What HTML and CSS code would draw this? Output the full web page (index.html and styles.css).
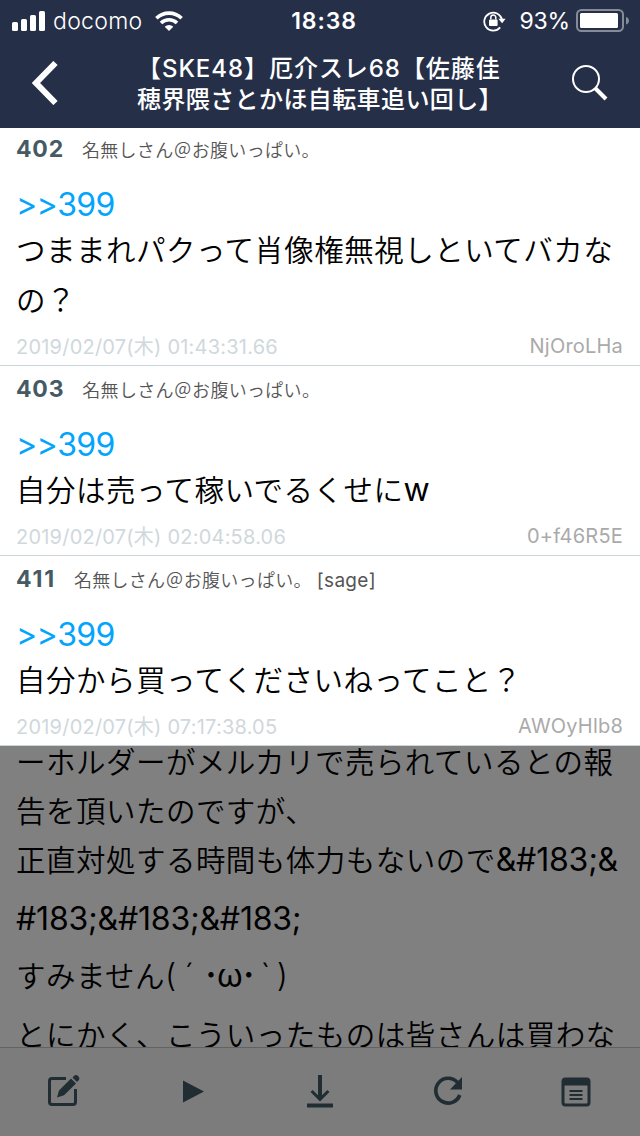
FILE: index.html
```
<!DOCTYPE html>
<html lang="ja">
<head>
<meta charset="utf-8">
<title>厄介スレ68</title>
<link rel="stylesheet" href="styles.css">
</head>
<body>
<div class="screen">
  <header class="header">
    <div class="status">
      <div class="status-left">
        <svg class="signal" width="34" height="20" viewBox="0 0 34 20" fill="#fff"><rect x="0" y="11" width="6" height="9" rx="1.6"/><rect x="9" y="8" width="6" height="12" rx="1.6"/><rect x="18" y="4" width="6" height="16" rx="1.6"/><rect x="27" y="0" width="6" height="20" rx="1.6"/></svg>
        <span class="carrier">docomo</span>
        <svg class="wifi" width="28" height="20" viewBox="0 0 28 20" fill="none" stroke="#fff" stroke-width="3.6"><path d="M1.4 7.2A18.2 18.2 0 0 1 26.6 7.2"/><path d="M6 12A11.6 11.6 0 0 1 22 12"/><path d="M14 20L9.7 15.7A6.2 6.2 0 0 1 18.3 15.7Z" fill="#fff" stroke="none"/></svg>
      </div>
      <div class="clock">18:38</div>
      <div class="status-right">
        <svg class="lock" width="23" height="22" viewBox="0 0 23 22"><path d="M17.2 17.4A9 9 0 1 1 19 9.500" fill="none" stroke="#fff" stroke-width="1.8"/><path d="M15.400 8.8H22.6L19.1 13.2Z" fill="#fff"/><rect x="6" y="9.500" width="8.6" height="6.5" rx="1" fill="#fff"/><path d="M7.8 9.500V7.500A2.5 2.5 0 0 1 12.8 7.500V9.500" fill="none" stroke="#fff" stroke-width="1.5"/></svg>
        <span class="percent">93%</span>
        <svg class="battery" width="53" height="24" viewBox="0 0 53 24"><rect x="1" y="1" width="46" height="21" rx="4.5" fill="none" stroke="#878b98" stroke-width="2"/><rect x="4" y="4" width="38" height="15" rx="1.5" fill="#fff"/><path d="M50 8Q53 9 53 11.700T50 15.500Z" fill="#878b98"/></svg>
      </div>
    </div>
    <div class="nav">
      <svg class="back" width="28" height="44" viewBox="0 0 28 44" fill="none" stroke="#fff" stroke-width="6"><path d="M23.500 2L4 22L23.500 42"/></svg>
      <h1 class="title"><span class="t1">【SKE48】厄介スレ68【佐藤佳</span><span class="t2">穂界隈さとかほ自転車追い回し】</span></h1>
      <svg class="search" width="36" height="36" viewBox="0 0 36 36" fill="none" stroke="#fff"><circle cx="14" cy="14" r="13" stroke-width="2"/><path d="M23 23L34 34" stroke-width="4"/></svg>
    </div>
  </header>

  <main class="posts">
    <article class="post">
      <div class="post-head"><b class="num">402</b><span class="name">名無しさん＠お腹いっぱい。</span></div>
      <div class="quote">&gt;&gt;399</div>
      <div class="line">つままれパクって肖像権無視しといてバカな</div>
      <div class="line">の？</div>
      <div class="post-foot"><span class="date">2019/02/07(木) 01:43:31.66</span><span class="id">NjOroLHa</span></div>
    </article>
    <article class="post">
      <div class="post-head"><b class="num">403</b><span class="name">名無しさん＠お腹いっぱい。</span></div>
      <div class="quote">&gt;&gt;399</div>
      <div class="line">自分は売って稼いでるくせに<span class="latin">w</span></div>
      <div class="post-foot"><span class="date">2019/02/07(木) 02:04:58.06</span><span class="id">0+f46R5E</span></div>
    </article>
    <article class="post">
      <div class="post-head"><b class="num narrow">411</b><span class="name">名無しさん＠お腹いっぱい。<span class="sage">[sage]</span></span></div>
      <div class="quote">&gt;&gt;399</div>
      <div class="line">自分から買ってくださいねってこと？</div>
      <div class="post-foot"><span class="date">2019/02/07(木) 07:17:38.05</span><span class="id">AWOyHlb8</span></div>
    </article>
  </main>

  <section class="dimmed">
    <div class="line">ーホルダーがメルカリで売られているとの報</div>
    <div class="line">告を頂いたのですが、</div>
    <div class="line">正直対処する時間も体力もないので<span class="latin">&amp;#183;&amp;</span></div>
    <div class="line tall"><span class="latin">#183;&amp;#183;&amp;#183;</span></div>
    <div class="line">すみません<span class="latin face">(</span><span class="mark acute">´</span><span class="latin eyes">･ω･</span><span class="mark grave">`</span><span class="latin face">)</span></div>
    <div class="line last">とにかく、こういったものは皆さんは買わな</div>
  </section>

  <footer class="toolbar">
    <div class="tool"><svg width="34" height="34" viewBox="0 0 34 34"><path d="M19 4.500H5Q2.500 4.500 2.500 7V28Q2.500 30.500 5 30.500H26Q28.500 30.500 28.500 28V15" fill="none" stroke="#202d33" stroke-width="3"/><path d="M10 23.500L12 16.500L24 4.500L29 9.500L17 21.200ZM25.500 3.500L27.400 1.600Q29.300 .2 31.300 2.200T31.900 6.100L30 8Z" fill="#202d33"/></svg></div>
    <div class="tool"><svg width="34" height="34" viewBox="0 0 34 34"><path d="M8 6.500V28.500L29 17.500Z" fill="#202d33"/></svg></div>
    <div class="tool"><svg width="34" height="34" viewBox="0 0 34 34" fill="none" stroke="#202d33"><path d="M17 1V24" stroke-width="4"/><path d="M8.600 17L17 25.400L25.400 17" stroke-width="3"/><path d="M4 31.500H30" stroke-width="4"/></svg></div>
    <div class="tool"><svg width="34" height="34" viewBox="0 0 34 34"><path d="M26.500 8.500A12.400 12.400 0 1 0 28.800 21" fill="none" stroke="#202d33" stroke-width="3.600"/><path d="M31 3V15.500H19Z" fill="#202d33"/></svg></div>
    <div class="tool"><svg width="34" height="34" viewBox="0 0 34 34" fill="none" stroke="#202d33"><rect x="4" y="5" width="26" height="26" rx="2.500" stroke-width="3"/><path d="M4 8H30" stroke-width="7"/><path d="M10.500 17H23.500M10.500 21H23.500M10.500 25H23.500" stroke-width="2"/></svg></div>
  </footer>
</div>
</body>
</html>
```
FILE: styles.css
```
* { box-sizing: border-box; }
body {
  margin: 0;
  font-family: Inter, "Noto Sans CJK JP", sans-serif;
}
svg { display: block; flex: none; }
.screen {
  width: 640px;
  height: 1136px;
  overflow: hidden;
  display: flex;
  flex-direction: column;
  background: #fff;
}
.header {
  flex: none;
  height: 128px;
  background: #262f48;
  color: #fff;
}
.status {
  height: 41px;
  display: grid;
  grid-template-columns: 1fr auto 1fr;
  align-items: center;
  padding: 0 11px 0 12px;
  font-size: 23px;
  line-height: 42px;
}
.status-left, .status-right { display: flex; align-items: center; }
.status-right { justify-content: flex-end; }
.carrier { margin-left: 7px; width: 102px; letter-spacing: 0.3px; font-weight: 300; }
.clock { font-weight: 600; letter-spacing: 0.9px; padding-left: 7px; }
.percent { margin: 0 6px 0 14px; letter-spacing: -0.2px; }
.nav {
  height: 87px;
  display: flex;
  justify-content: space-between;
  align-items: center;
  padding: 0 32px 3px 32px;
}
.title {
  margin: 0 0 0 8px;
  height: 61px;
  width: 366px;
  display: flex;
  flex-direction: column;
  font-size: 24px;
  line-height: 31px;
  font-weight: 500;
  white-space: nowrap;
}
.t1 { letter-spacing: 0.95px; }
.t2 { letter-spacing: 0.4px; }

.posts { flex: none; height: 618px; display: flex; flex-direction: column; justify-content: flex-end; overflow: hidden; }
.post { flex: none; padding: 0 17px 0 16px; border-bottom: 1px solid #ccd5d9; }
.post-head {
  height: 46px;
  margin-bottom: 13px;
  display: flex;
  align-items: center;
  gap: 18px;
}
.num { font-size: 23px; font-weight: 700; color: #455a64; letter-spacing: 0.8px; }
.num.narrow { letter-spacing: 1.8px; }
.name { font-size: 18px; letter-spacing: 0.3px; font-weight: 350; color: #555; white-space: nowrap; }
.sage { margin-left: 5px; font-size: 19px; font-weight: 400; letter-spacing: 0.3px; }
.quote { height: 40px; line-height: 40px; font-size: 32px; letter-spacing: -0.6px; color: #03a4fc; }
.line { height: 50px; line-height: 50px; font-size: 29.5px; letter-spacing: 0.48px; font-weight: 350; white-space: nowrap; color: #000; }
.latin { font-size: 32px; letter-spacing: -0.2px; font-weight: 400; }
.post-foot {
  height: 40px;
  display: flex;
  justify-content: space-between;
  align-items: center;
  font-size: 20px;
}
.date { color: #cfd8dc; letter-spacing: 0.22px; }
.id { color: #aaa; letter-spacing: 0.2px; padding-top: 2px; }

.dimmed { flex: none; height: 301px; overflow: hidden; background: #808080; padding: 0 17px 0 16px; }
.dimmed .line { height: 49px; line-height: 50px; }
.dimmed .line:first-child { margin-top: -9px; }
.dimmed .line.tall { height: 67px; line-height: 70px; }
.dimmed .line.last { height: 51px; padding-top: 10px; }
.latin.face { font-weight: 300; }
.latin.eyes { letter-spacing: -2px; }
.mark { display: inline-block; text-align: center; font-size: 32px; }
.acute { width: 27px; }
.grave { width: 22px; }
.toolbar {
  height: 89px;
  background: #7c7c7c;
  border-top: 1px solid #626262;
  display: grid;
  grid-template-columns: repeat(5, 1fr);
}
.tool { display: flex; justify-content: center; padding-top: 26px; }
```
